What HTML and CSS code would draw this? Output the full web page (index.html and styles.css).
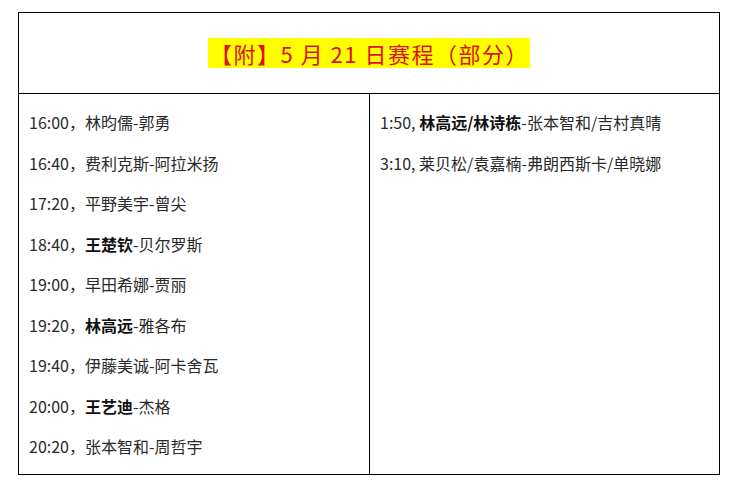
FILE: index.html
```html
<!DOCTYPE html>
<html lang="zh">
<head>
<meta charset="utf-8">
<link rel="stylesheet" href="styles.css">
</head>
<body>
<table class="sched">
  <tr>
    <td class="head" colspan="2"><span class="title">【附】5 月 21 日赛程（部分）</span></td>
  </tr>
  <tr>
    <td class="col left">
      <p>16:00，林昀儒-郭勇</p>
      <p>16:40，费利克斯-阿拉米扬</p>
      <p>17:20，平野美宇-曾尖</p>
      <p>18:40，<b>王楚钦</b>-贝尔罗斯</p>
      <p>19:00，早田希娜-贾丽</p>
      <p>19:20，<b>林高远</b>-雅各布</p>
      <p>19:40，伊藤美诚-阿卡舍瓦</p>
      <p>20:00，<b>王艺迪</b>-杰格</p>
      <p>20:20，张本智和-周哲宇</p>
    </td>
    <td class="col right">
      <p>1:50, <b>林高远/林诗栋</b>-张本智和/吉村真晴</p>
      <p>3:10, 莱贝松/袁嘉楠-弗朗西斯卡/单晓娜</p>
    </td>
  </tr>
</table>
</body>
</html>
```
FILE: styles.css
```css
body {
  margin: 12px 0 0 18px;
  background: #fff;
  font-family: "Noto Sans CJK SC", "Noto Sans", sans-serif;
  color: #2a2a2a;
}
.sched {
  border-collapse: collapse;
  width: 702px;
}
.sched td {
  border: 1px solid #000;
  padding: 0;
}
.head {
  height: 80px;
  text-align: center;
  vertical-align: middle;
}
.title {
  background: #ffff00;
  color: #e01010;
  font-size: 22px;
  line-height: 30px;
  display: inline-block;
  padding: 0 1px 0 2px;
  letter-spacing: 1.5px;
}
.col {
  vertical-align: top;
  padding-top: 8px !important;
  padding-bottom: 7px !important;
}
.left {
  width: 340px;
  padding-left: 10px !important;
}
.right {
  padding-left: 10px !important;
}
.col p {
  margin: 0;
  font-size: 16px;
  line-height: 40.5px;
  white-space: nowrap;
}
b {
  font-weight: 700;
  color: #111;
}
```
